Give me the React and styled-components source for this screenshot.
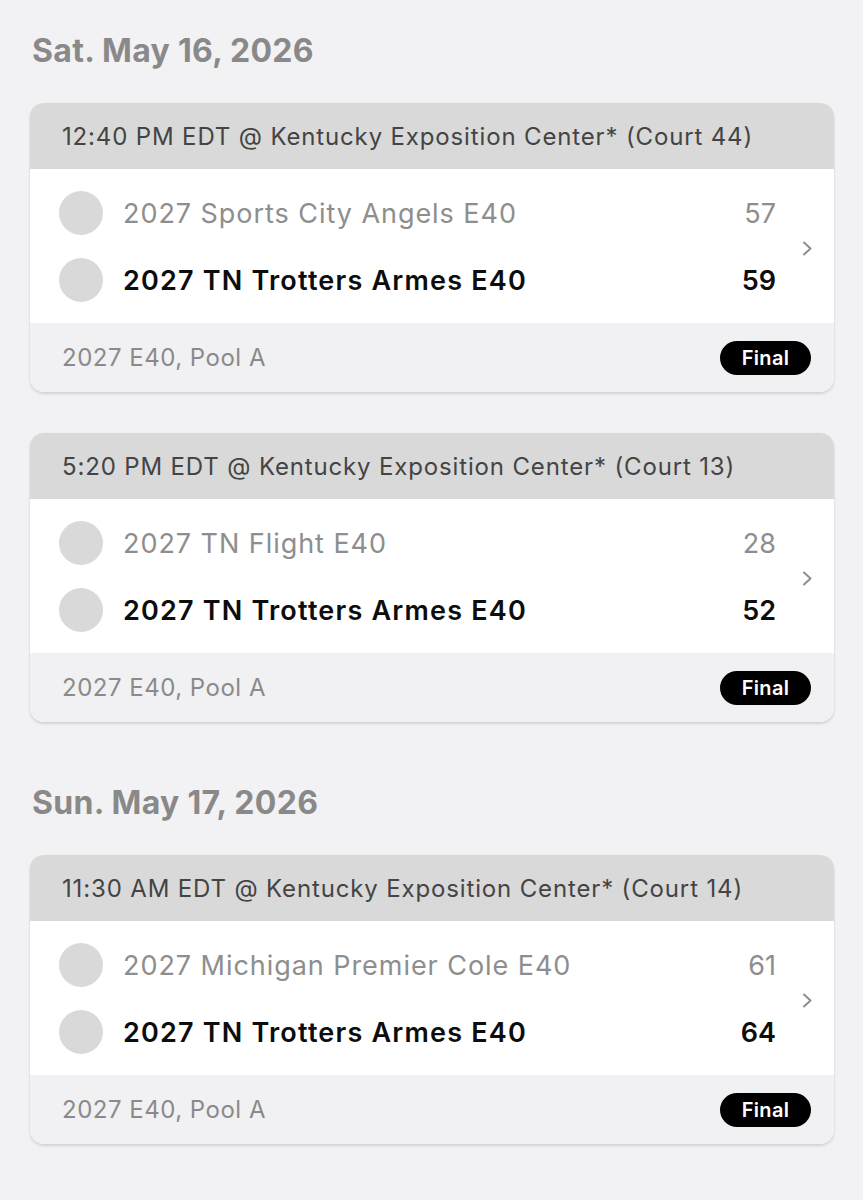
import React from "react";
import styled, { createGlobalStyle } from "styled-components";

const Global = createGlobalStyle`
  html, body { margin: 0; padding: 0; background: #f2f2f4; }
  body { font-family: Inter, "Noto Sans", sans-serif; -webkit-font-smoothing: antialiased; }
`;

const Page = styled.div`
  padding: 31px 29px 40px 30px;
  display: flex;
  flex-direction: column;
  gap: 61px;
`;

const Section = styled.section`
  display: flex;
  flex-direction: column;
`;

const DateTitle = styled.h2`
  margin: 0 0 32px 2px;
  font-size: 32px;
  line-height: 40px;
  font-weight: 700;
  color: #898989;
  letter-spacing: 0.3px;
`;

const CardList = styled.div`
  display: flex;
  flex-direction: column;
  gap: 41px;
`;

const Card = styled.article`
  border-radius: 14px;
  overflow: hidden;
  background: #ffffff;
  box-shadow: 0 2px 3px rgba(0, 0, 0, 0.13), 0 0 1px rgba(0, 0, 0, 0.12);
`;

const CardHeader = styled.div`
  height: 66px;
  display: flex;
  align-items: center;
  padding: 1px 0 0 32px;
  box-sizing: border-box;
  background: #d9d9d9;
  color: #444444;
  font-size: 24px;
  letter-spacing: 0.85px;
  white-space: nowrap;
`;

const CardBody = styled.div`
  display: flex;
  align-items: center;
  padding: 22px 21px 21px 29px;
  background: #ffffff;
`;

const Teams = styled.div`
  flex: 1;
  display: flex;
  flex-direction: column;
  gap: 23px;
`;

const TeamRow = styled.div`
  display: flex;
  align-items: center;
  height: 44px;
`;

const Avatar = styled.span`
  width: 44px;
  height: 44px;
  border-radius: 50%;
  background: #d9d9d9;
  flex: none;
  margin-right: 20px;
`;

const TeamName = styled.span`
  flex: 1;
  font-size: 27px;
  font-weight: ${(p) => (p.$winner ? 600 : 400)};
  letter-spacing: ${(p) => (p.$winner ? "1.2px" : "0.95px")};
  color: ${(p) => (p.$winner ? "#0d0d0d" : "#8e8e8e")};
  white-space: nowrap;
`;

const Score = styled.span`
  font-size: 27px;
  font-weight: ${(p) => (p.$winner ? 600 : 400)};
  color: ${(p) => (p.$winner ? "#0d0d0d" : "#8e8e8e")};
  font-family: Inter, "Liberation Sans", sans-serif;
`;

const Chevron = styled.svg`
  flex: none;
  margin-left: 25px;
  margin-top: 4px;
  width: 12px;
  height: 15px;
`;

const CardFooter = styled.div`
  height: 69px;
  display: flex;
  align-items: center;
  justify-content: space-between;
  padding: 0 23px 0 32px;
  background: #f1f1f3;
`;

const Pool = styled.span`
  font-size: 24px;
  letter-spacing: 0.5px;
  color: #8a8a8a;
`;

const Badge = styled.span`
  height: 34px;
  padding: 0 19px;
  min-width: 53px;
  border-radius: 17px;
  background: #000;
  color: #fff;
  font-size: 20px;
  font-weight: 600;
  letter-spacing: 0.3px;
  display: inline-flex;
  align-items: center;
  justify-content: center;
`;

const days = [
  {
    date: "Sat. May 16, 2026",
    games: [
      {
        header: "12:40 PM EDT @ Kentucky Exposition Center* (Court 44)",
        teams: [
          { name: "2027 Sports City Angels E40", score: 57 },
          { name: "2027 TN Trotters Armes E40", score: 59, winner: true },
        ],
      },
      {
        header: "5:20 PM EDT @ Kentucky Exposition Center* (Court 13)",
        teams: [
          { name: "2027 TN Flight E40", score: 28 },
          { name: "2027 TN Trotters Armes E40", score: 52, winner: true },
        ],
      },
    ],
  },
  {
    date: "Sun. May 17, 2026",
    games: [
      {
        header: "11:30 AM EDT @ Kentucky Exposition Center* (Court 14)",
        teams: [
          { name: "2027 Michigan Premier Cole E40", score: 61 },
          { name: "2027 TN Trotters Armes E40", score: 64, winner: true },
        ],
      },
    ],
  },
];

function GameCard({ game }) {
  return (
    <Card>
      <CardHeader>{game.header}</CardHeader>
      <CardBody>
        <Teams>
          {game.teams.map((t, i) => (
            <TeamRow key={i}>
              <Avatar />
              <TeamName $winner={t.winner}>{t.name}</TeamName>
              <Score $winner={t.winner}>{t.score}</Score>
            </TeamRow>
          ))}
        </Teams>
        <Chevron viewBox="0 0 12 15" fill="none">
          <path d="M3 1.5l6.5 6-6.5 6" stroke="#8e8e8e" strokeWidth="2" strokeLinecap="round" strokeLinejoin="round" />
        </Chevron>
      </CardBody>
      <CardFooter>
        <Pool>2027 E40, Pool A</Pool>
        <Badge>Final</Badge>
      </CardFooter>
    </Card>
  );
}

export default function App() {
  return (
    <>
      <Global />
      <Page>
        {days.map((d) => (
          <Section key={d.date}>
            <DateTitle>{d.date}</DateTitle>
            <CardList>
              {d.games.map((g, i) => (
                <GameCard key={i} game={g} />
              ))}
            </CardList>
          </Section>
        ))}
      </Page>
    </>
  );
}
